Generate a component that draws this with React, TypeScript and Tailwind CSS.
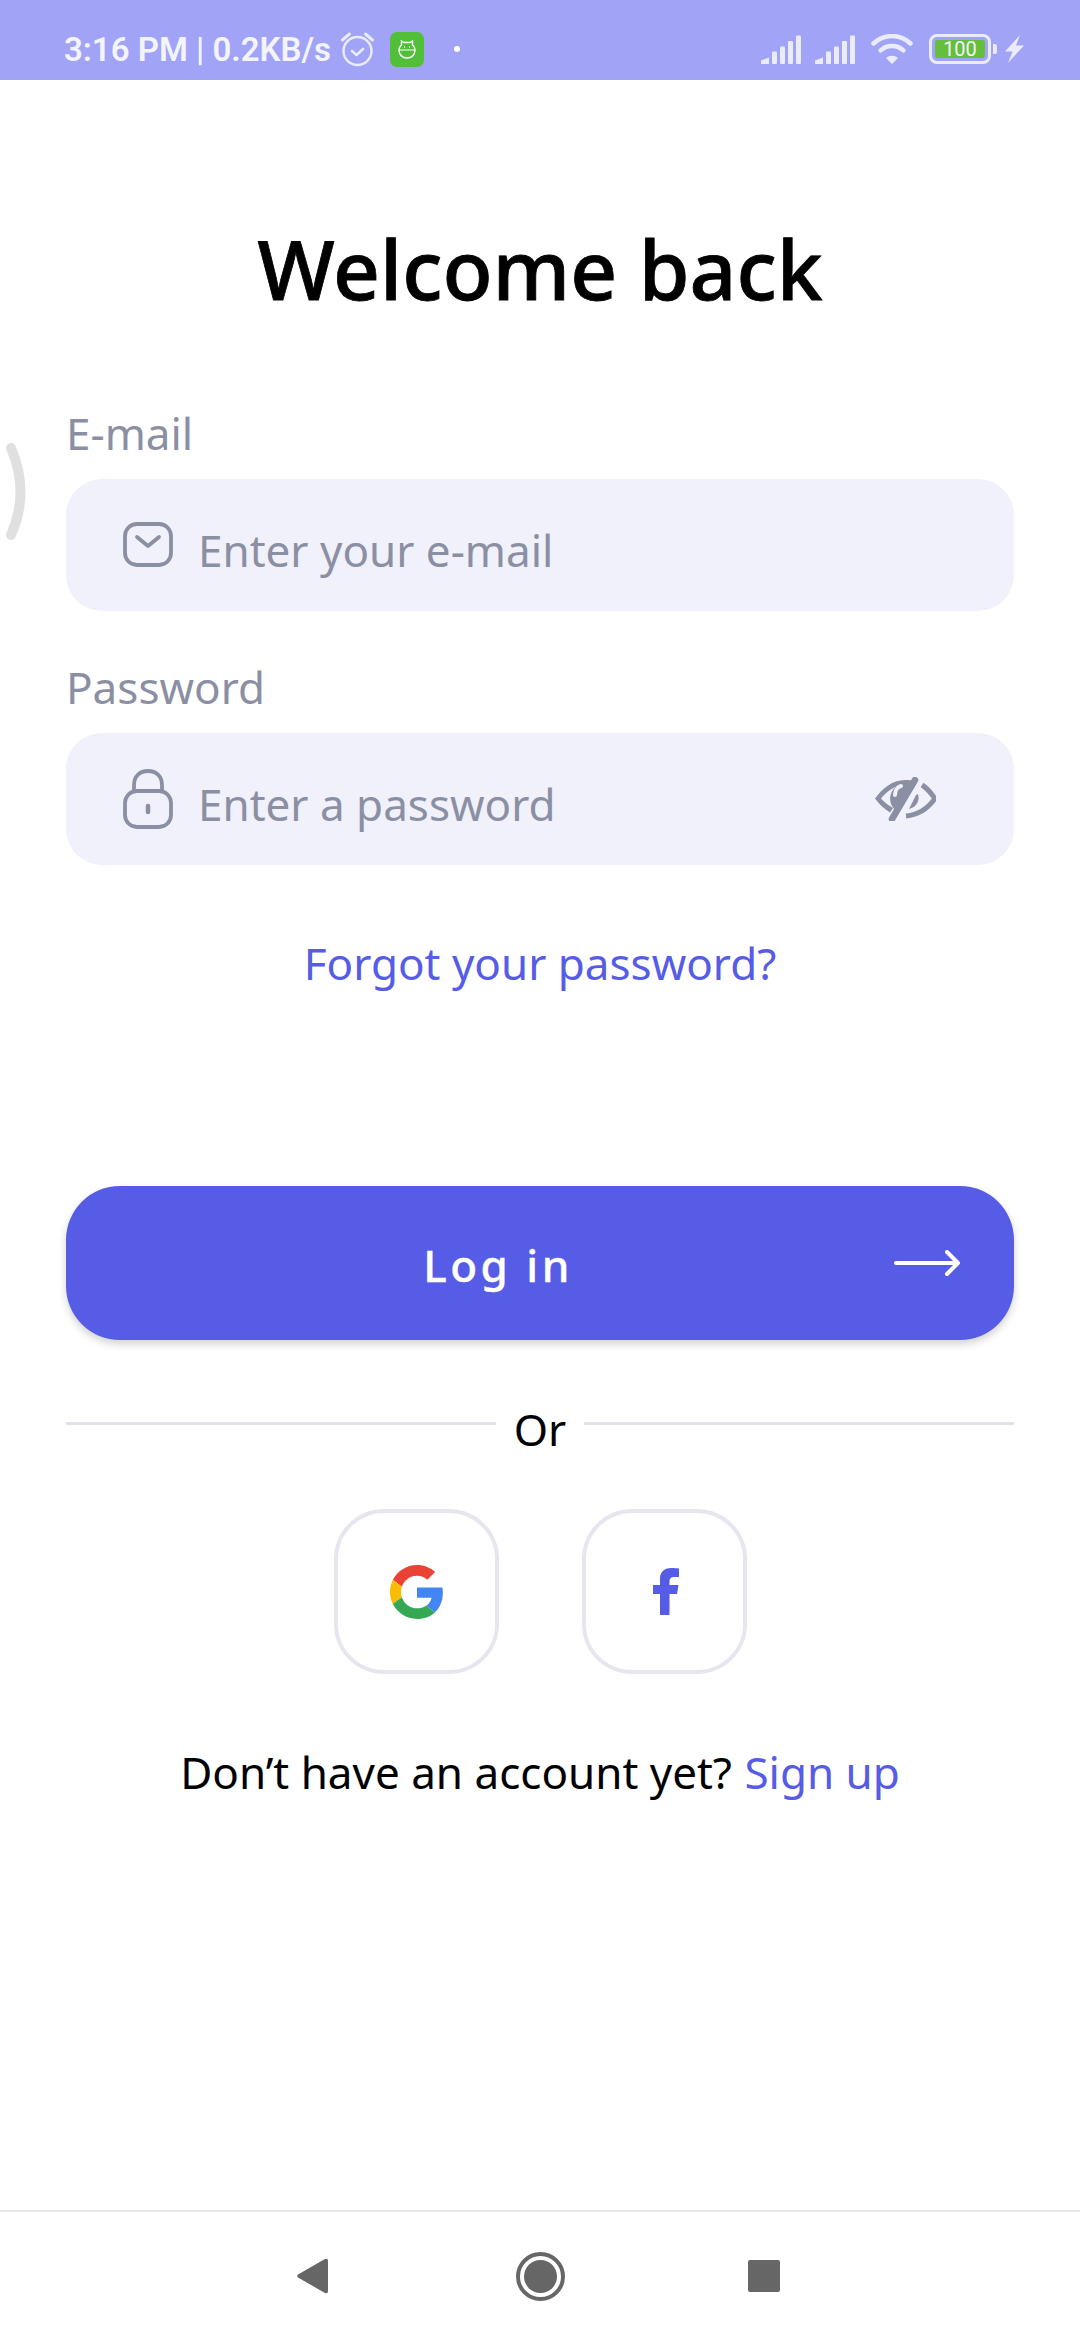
import React from "react";

const fieldClass = "flex items-center h-[132px] rounded-[36px] bg-[#f0f1fa]";

function SignalIcon() {
    return (
        <svg width="40" height="29" viewBox="0 0 40 29" fill="#eaebfd">
            <path d="M0 29V25.500L8 22.500V29Z" />
            <rect x="11" y="16.500" width="5" height="12.500" rx="1" />
            <rect x="19" y="11.500" width="5" height="17.500" rx="1" />
            <rect x="27" y="6" width="5" height="23" rx="1" />
            <rect x="35" y="0.500" width="5" height="28.500" rx="1" />
        </svg>
    );
}

function StatusBar() {
    return (
        <div className="relative flex h-[80px] shrink-0 items-center bg-[#a1a4f6] pl-[64px] pr-[56px] pt-[18px] text-[#f3f4fe]">
            <span className="text-[33px] font-semibold leading-none font-['Roboto',sans-serif]">3:16 PM | 0.2KB/s</span>
            <svg className="ml-[9px]" width="35" height="36" viewBox="0 0 34 36" fill="none" stroke="#eaebfd" strokeWidth="2.400" strokeLinecap="round" strokeLinejoin="round">
                <circle cx="17" cy="20" r="14" />
                <path d="M11.500 20l4.500 4 6.500-6" strokeWidth="2.600" />
                <path d="M2 9l7-6M32 9l-7-6" strokeWidth="3" />
            </svg>
            <span className="ml-[15px] flex h-[35px] w-[34px] items-center justify-center rounded-[7px] bg-[#52bf38]">
                <svg width="18" height="20" viewBox="0 0 18 20" fill="none" stroke="#ffffff" strokeWidth="1.400">
                    <path d="M3.500 6V2l2.500 1.500h6L14.500 2v4C16.500 7.500 17 9 17 11c0 5-3.500 8-8 8s-8-3-8-8c0-2 .5-3.500 2.500-5Z" />
                    <path d="M1 11h16" strokeWidth="1" />
                    <path d="M6 8h1M11 8h1" />
                </svg>
            </span>
            <span className="ml-[30px] h-[6px] w-[6px] rounded-full bg-white" />
            <div className="ml-auto flex items-center">
                <SignalIcon />
                <span className="ml-[14px]"><SignalIcon /></span>
                <svg className="ml-[16px]" width="42" height="30" viewBox="0 0 42 30" fill="none" stroke="#eaebfd" strokeWidth="4.500" strokeLinecap="round">
                    <path d="M2.500 9.500C13 -0.500 29 -0.500 39.500 9.500" />
                    <path d="M9.500 16.500C15.500 10.500 26.500 10.500 32.500 16.500" />
                    <path d="M21 30l-6-6c3.500-3 8.500-3 12 0Z" fill="#eaebfd" stroke="none" />
                </svg>
                <div className="relative ml-[16px] flex h-[30px] w-[62px] items-center justify-center rounded-[8px] border-[3.5px] border-[#eaebfd] p-[3px]">
                    <span className="flex h-full w-full items-center justify-center rounded-[2px] bg-[#66bf3c] text-[20px] leading-none text-[#f3f4fe] font-['Roboto',sans-serif]">100</span>
                </div>
                <span className="ml-[2px] h-[10px] w-[4px] rounded-r-[2px] bg-[#eaebfd]" />
                <svg className="ml-[8px]" width="19" height="28" viewBox="0 0 19 28" fill="#eaebfd">
                    <path d="M15 0L0 16.500h7.500L3 28 19 10.500h-8Z" />
                </svg>
            </div>
        </div>
    );
}

function GoogleLogo() {
    return (
        <svg width="54" height="54" viewBox="0 0 48 48">
            <path fill="#EA4335" d="M24 9.500c3.540 0 6.710 1.220 9.210 3.600l6.850-6.850C35.900 2.380 30.470 0 24 0 14.620 0 6.510 5.380 2.560 13.220l7.980 6.190C12.430 13.720 17.740 9.500 24 9.500z" />
            <path fill="#4285F4" d="M46.980 24.550c0-1.570-.15-3.090-.38-4.550H24v9.020h12.940c-.58 2.960-2.260 5.480-4.780 7.180l7.730 6c4.510-4.180 7.090-10.360 7.090-17.650z" />
            <path fill="#FBBC05" d="M10.530 28.590c-.48-1.450-.76-2.990-.76-4.590s.27-3.140.76-4.590l-7.980-6.190C.92 16.460 0 20.120 0 24c0 3.880.92 7.540 2.560 10.780l7.970-6.190z" />
            <path fill="#34A853" d="M24 48c6.480 0 11.930-2.130 15.890-5.810l-7.730-6c-2.150 1.450-4.920 2.300-8.160 2.300-6.260 0-11.570-4.220-13.470-9.910l-7.980 6.190C6.510 42.620 14.620 48 24 48z" />
        </svg>
    );
}

function NavBar() {
    return (
        <div className="flex h-[130px] shrink-0 items-center justify-center border-t-2 border-[#e8e8e8] bg-white pr-[3px]">
            <svg className="mr-[188px]" width="31" height="36" viewBox="0 0 31 36" fill="#666666">
                <path d="M28 1L1 16.500Q-0.500 18 1 19.500L28 35Q31 36 31 33V3Q31 0 28 1Z" />
            </svg>
            <svg className="mr-[183px]" width="49" height="49" viewBox="0 0 49 49">
                <circle cx="24.500" cy="24.500" r="22.500" fill="none" stroke="#666666" strokeWidth="4" />
                <circle cx="24.500" cy="24.500" r="16.500" fill="#666666" />
            </svg>
            <span className="h-[32px] w-[32px] rounded-[2px] bg-[#666666]" />
        </div>
    );
}

export default function App() {
    return (
        <div className="relative flex h-[2340px] w-[1080px] flex-col overflow-hidden bg-white font-['Noto_Sans',sans-serif]">
            <StatusBar />

            {/* leftover edge-swipe handle */}
            <svg className="absolute left-0 top-[440px]" width="30" height="104" viewBox="0 0 30 104" fill="none" stroke="#e0e0e0" strokeWidth="10" strokeLinecap="round">
                <path d="M11 8Q30 52 11 95" />
            </svg>

            <main className="flex flex-1 flex-col px-[66px]">
                <h1 className="mt-[132px] text-center text-[82px] leading-[112px] font-medium text-black [-webkit-text-stroke:0.8px_#000000]">Welcome back</h1>

                <label className="mt-[79px] text-[44px] leading-[60px] text-[#8b8fa3]">E-mail</label>
                <div className={`${fieldClass} mt-[16px] pl-[57px]`}>
                    <svg width="50" height="46" viewBox="0 0 50 46" fill="none" stroke="#8b8fa3" strokeWidth="3.800" strokeLinecap="round" strokeLinejoin="round">
                        <rect x="2" y="2" width="46" height="41" rx="12" />
                        <path d="M14 15L25 24L36 15" />
                    </svg>
                    <span className="ml-[25px] mt-[9px] text-[44px] leading-none text-[#8b8fa3]">Enter your e-mail</span>
                </div>

                <label className="mt-[46px] text-[44px] leading-[60px] text-[#8b8fa3]">Password</label>
                <div className={`${fieldClass} mt-[16px] pl-[57px] pr-[78px]`}>
                    <svg width="50" height="60" viewBox="0 0 50 60" fill="none" stroke="#8b8fa3" strokeWidth="3.800" strokeLinecap="round" strokeLinejoin="round">
                        <path d="M11 22V16C11 7 17 2 25 2S39 7 39 16V22" />
                        <rect x="2" y="22" width="46" height="36" rx="12" />
                        <path d="M25 37v6" strokeWidth="4.500" />
                    </svg>
                    <span className="ml-[25px] mt-[9px] text-[44px] leading-none text-[#8b8fa3]">Enter a password</span>
                    <svg className="ml-auto" width="62" height="44" viewBox="0 0 62 44" fill="none">
                        <path d="M38 3.500C35 3 33 3 31 3 18 3 8 12 1 21.500 5 27 10 32 16 35.500L19 31C14 28 10 25 7 21.500 13 14 21 8 31 8c1 0 2 0 3 .5Z" fill="#8b8fa3" />
                        <path d="M41 3L18 42" stroke="#8b8fa3" strokeWidth="6.500" strokeLinecap="round" />
                        <path d="M37 5C26 3 17 11 16 21c0 5 2 9 5 12Z" fill="#8b8fa3" />
                        <path d="M27 9c-4 1-6 5-6 9" stroke="#f0f1fa" strokeWidth="4" strokeLinecap="round" />
                        <path d="M48 8c5 3 9 8 13 13.500C55 30 46 38 32 39" stroke="#8b8fa3" strokeWidth="5" />
                        <path d="M44 17c2 6-1 13-9 15l7-14Z" fill="#8b8fa3" />
                    </svg>
                </div>

                <a className="mt-[68px] text-center text-[44px] leading-[60px] text-[#565ce5]">Forgot your password?</a>

                <button className="mt-[193px] flex h-[154px] items-center rounded-[54px] bg-[#565ce5] pl-[36px] pr-[54px] shadow-[0_4px_8px_rgba(0,0,0,0.18)]">
                    <span className="mt-[4px] flex-1 text-center text-[44px] leading-none font-medium tracking-[3.5px] text-white [-webkit-text-stroke:0.4px_#ffffff]">Log in</span>
                    <svg width="66" height="26" viewBox="0 0 66 26" fill="none" stroke="#ffffff" strokeWidth="4" strokeLinecap="round" strokeLinejoin="round">
                        <path d="M2 13H64M53 2l11 11-11 11" />
                    </svg>
                </button>

                <div className="mt-[53px] flex items-center">
                    <span className="h-[3px] flex-1 bg-[#e3e3e7]" />
                    <span className="mx-[18px] translate-y-[6px] text-[44px] leading-[60px] text-black">Or</span>
                    <span className="h-[3px] flex-1 bg-[#e3e3e7]" />
                </div>

                <div className="mt-[56px] flex justify-center gap-[83px] pl-[1px]">
                    <div className="flex h-[165px] w-[165px] items-center justify-center rounded-[50px] border-4 border-[#e6e6ef]">
                        <GoogleLogo />
                    </div>
                    <div className="flex h-[165px] w-[165px] items-center justify-center rounded-[50px] border-4 border-[#e6e6ef] pl-[3px]">
                        <svg width="26" height="47" viewBox="0 0 26 47" fill="#565ce5">
                            <path d="M7 47V26H0V17H7V11C7 4 11 0 18 0 21 0 24 .2 26 .5V9H21C18 9 16.500 10.500 16.500 13V17H25.500L24 26H16.500V47Z" />
                        </svg>
                    </div>
                </div>

                <p className="mt-[68px] text-center text-[44px] leading-[60px] text-black">
                    Don’t have an account yet? <span className="ml-[1px] text-[#565ce5]">Sign up</span>
                </p>
            </main>

            <NavBar />
        </div>
    );
}
